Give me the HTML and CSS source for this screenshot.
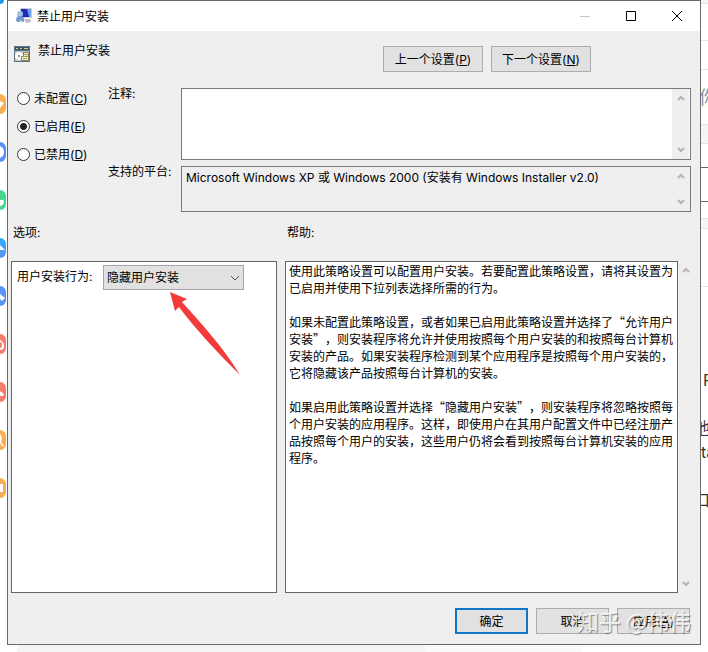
FILE: index.html
```html
<!DOCTYPE html>
<html lang="zh-CN">
<head>
    <meta charset="UTF-8">
    <meta name="viewport" content="width=device-width, initial-scale=1.0">
    <title>禁止用户安装</title>
    <link rel="stylesheet" href="styles.css">
</head>
<body>
    <!-- 窗口左侧露出的应用图标 -->
    <div class="dock">
        <span class="app sky"></span>
        <span class="app orange"><svg viewBox="0 0 6 20"><path d="M0 7l4 2-4 5z"/></svg></span>
        <span class="app blue"><svg viewBox="0 0 6 20"><path d="M0 4q4 2 4 6t-4 6z"/></svg></span>
        <span class="app green"><svg viewBox="0 0 6 20"><path d="M0 10q4-1 4 2t-4 4z"/></svg></span>
        <span class="app azure"><svg viewBox="0 0 6 20"><path d="M0 7l5 5H0z"/></svg></span>
        <span class="app blue"><svg viewBox="0 0 6 20"><path d="M0 8l5 4-3 3-2-2z"/></svg></span>
        <span class="app red"><svg viewBox="0 0 6 20"><path d="M0 5l1 2q3 1 3 5t-4 4v-2q2 0 2-3t-2-3z"/></svg></span>
        <span class="app red"><svg viewBox="0 0 6 20"><path d="M0 9l4 3-1 2H0z"/></svg></span>
        <span class="app orange"><svg viewBox="0 0 6 20"><path d="M0 4q3 3 1 8l3 4-1 1-3-4z"/></svg></span>
        <span class="app orange"><svg viewBox="0 0 6 20"><path d="M0 6h3v8H0z"/></svg></span>
    </div>

    <form class="window" onsubmit="return false">
        <header class="titlebar">
            <svg class="app-icon" viewBox="0 0 16 16">
                <path d="M4 0h12v10H4z" fill="#c9cdd8"/>
                <path d="M5 1h10v8H5z" fill="#1c2cae"/>
                <path d="M11 1h4v8h-2z" fill="#6f9cec"/>
                <path d="M8 11h6l1 3-5 1z" fill="#b9bdc4"/>
                <circle cx="4" cy="6" r="3" fill="#9fc4ec"/>
                <path d="M0 12q0-4 4-4t4 4v2H1z" fill="#6f9ace"/>
                <path d="M3 12l5 2-3 1z" fill="#e3e9f2"/>
            </svg>
            <h1>禁止用户安装</h1>
            <button type="button" class="win-btn" aria-label="最小化">
                <svg viewBox="0 0 10 10"><path d="M0 5.500h10" stroke="#c4c4c4"/></svg>
            </button>
            <button type="button" class="win-btn" aria-label="最大化">
                <svg viewBox="0 0 10 10"><path d="M.5.5h9v9h-9z" stroke="#000"/></svg>
            </button>
            <button type="button" class="win-btn" aria-label="关闭">
                <svg viewBox="0 0 10 10"><path d="M0 0l10 10M10 0L0 10" stroke="#000"/></svg>
            </button>
        </header>

        <section class="heading">
            <svg class="policy-icon" viewBox="0 0 16 16">
                <path d="M0 0h16v16H0z" fill="#5f7280"/>
                <path d="M1 1h14v3H1z" fill="#35536e"/>
                <path d="M2 2h2v1H2zM6 2h2v1H6zM10 2h4v1h-4z" fill="#e0c878"/>
                <path d="M1 5h14v10H1z" fill="#b9c4c0"/>
                <circle cx="5" cy="10" r="4" fill="#fff"/>
                <circle cx="5" cy="10" r="1" fill="#5c7a6c"/>
                <path d="M9.500 6.500h5v8h-7v-4h2z" fill="#f3edc8" stroke="#8c8250"/>
                <path d="M10 8.500h4M10 10.500h4M9 12.500h4" stroke="#a39a68"/>
            </svg>
            <h2>禁止用户安装</h2>
            <div class="nav">
                <button type="button" class="btn nav-btn">上一个设置(<u>P</u>)</button>
                <button type="button" class="btn nav-btn">下一个设置(<u>N</u>)</button>
            </div>
        </section>

        <section class="settings">
            <div class="states">
                <label><input type="radio" name="state" value="none"> 未配置(<u>C</u>)</label>
                <label><input type="radio" name="state" value="on" checked> 已启用(<u>E</u>)</label>
                <label><input type="radio" name="state" value="off"> 已禁用(<u>D</u>)</label>
            </div>
            <div class="fields">
                <label for="comment">注释:</label>
                <div class="box comment">
                    <textarea id="comment"></textarea>
                    <div class="scroll">
                        <svg viewBox="0 0 8 6"><path d="M1 5l3-3 3 3"/></svg>
                        <svg viewBox="0 0 8 6"><path d="M1 1l3 3 3-3"/></svg>
                    </div>
                </div>
                <label for="platform">支持的平台:</label>
                <div class="box platform">
                    <textarea id="platform" readonly>Microsoft Windows XP 或 Windows 2000 (安装有 Windows Installer v2.0)</textarea>
                    <div class="scroll">
                        <svg viewBox="0 0 8 6"><path d="M1 5l3-3 3 3"/></svg>
                        <svg viewBox="0 0 8 6"><path d="M1 1l3 3 3-3"/></svg>
                    </div>
                </div>
            </div>
        </section>

        <section class="panels">
            <h3>选项:</h3>
            <h3><label for="help">帮助:</label></h3>
            <div class="options">
                <label for="behavior">用户安装行为:</label>
                <div class="select">
                    <select id="behavior">
                        <option>隐藏用户安装</option>
                        <option>允许用户安装</option>
                    </select>
                    <svg viewBox="0 0 10 6"><path d="M1 1l4 4 4-4"/></svg>
                </div>
                <svg class="pointer" viewBox="0 0 72 84"><path d="M0 0l17 7-5 3c18 20 42 46 58 73C50 63 26 38 9 15l-4 4z"/></svg>
            </div>
            <div class="help">
                <textarea id="help" readonly>使用此策略设置可以配置用户安装。若要配置此策略设置，请将其设置为已启用并使用下拉列表选择所需的行为。

如果未配置此策略设置，或者如果已启用此策略设置并选择了“允许用户安装”，则安装程序将允许并使用按照每个用户安装的和按照每台计算机安装的产品。如果安装程序检测到某个应用程序是按照每个用户安装的，它将隐藏该产品按照每台计算机的安装。

如果启用此策略设置并选择“隐藏用户安装”，则安装程序将忽略按照每个用户安装的应用程序。这样，即使用户在其用户配置文件中已经注册产品按照每个用户的安装，这些用户仍将会看到按照每台计算机安装的应用程序。</textarea>
                <div class="scroll">
                    <svg viewBox="0 0 8 6"><path d="M1 5l3-3 3 3"/></svg>
                    <svg viewBox="0 0 8 6"><path d="M1 1l3 3 3-3"/></svg>
                </div>
            </div>
        </section>

        <footer class="actions">
            <button type="submit" class="btn default">确定</button>
            <button type="button" class="btn">取消</button>
            <button type="button" class="btn">应用(<u>A</u>)</button>
            <span class="watermark">知乎 @伟伟</span>
        </footer>
    </form>

    <!-- 窗口右侧露出的网页 -->
    <div class="behind">
        <div class="row bar"></div>
        <div class="row tabs"></div>
        <div class="row tools"></div>
        <div class="row name">你</div>
        <div class="row band"></div>
        <div class="row gap"></div>
        <div class="row field"></div>
        <div class="row gap"></div>
        <div class="row thin"></div>
        <div class="row blank"></div>
        <div class="row article">
            <p class="lead">R</p>
            <p class="cut">他</p>
            <p>ta</p>
            <p class="cut last">口</p>
        </div>
    </div>

    <div class="below"></div>
</body>
</html>
```
FILE: styles.css
```css
* {
    box-sizing: border-box;
}

body {
    margin: 0;
    height: 100vh;
    display: grid;
    grid-template-columns: 7px 1fr 7px;
    grid-template-rows: minmax(0, 1fr) 7px;
    overflow: hidden;
    background: #fff;
    color: #000;
    font: 12px/17px Inter, "Noto Sans CJK SC", sans-serif;
}

h1, h2, h3, p {
    margin: 0;
    font-size: 12px;
    font-weight: normal;
}

button, select, textarea {
    font: inherit;
    color: inherit;
    border-radius: 0;
}

/* 左侧图标 */
.dock {
    display: flex;
    flex-direction: column;
    gap: 28px;
    overflow: hidden;
}

.app {
    flex: none;
    width: 6px;
    height: 20px;
    border-radius: 0 6px 6px 0;
}

.app svg {
    display: block;
    width: 6px;
    height: 20px;
    fill: #fff;
}

.sky {
    width: 4px;
    height: 4px;
    margin-bottom: 62px;
    background: #1a9af5;
    border-radius: 0 0 4px 0;
}

.orange { background: #fbae52; }
.blue { background: #5b93fa; }
.green { background: #45d68b; }
.azure { background: linear-gradient(#27b0f7, #5b93fa); }
.red { background: #fa7a6c; }

/* 窗口 */
.window {
    display: flex;
    flex-direction: column;
    background: #efefef;
    border: 1px solid #6a6a6a;
}

.titlebar {
    display: flex;
    align-items: center;
    height: 30px;
    padding-left: 8px;
    background: #fff;
}

.titlebar h1 {
    flex: 1;
    margin-left: 5px;
}

.app-icon, .policy-icon {
    width: 16px;
    height: 16px;
}

.win-btn {
    display: grid;
    place-items: center;
    width: 46px;
    height: 30px;
    padding: 0;
    background: none;
    border: none;
}

.win-btn svg {
    width: 10px;
    height: 10px;
    fill: none;
}

.heading {
    display: flex;
    padding: 15px 109px 0 6px;
    height: 57px;
}

.heading h2 {
    flex: 1;
    margin: -4px 0 0 8px;
}

.nav {
    display: flex;
    gap: 8px;
}

.btn {
    width: 73px;
    height: 26px;
    padding: 0;
    background: #e1e1e1;
    border: 1px solid #adadad;
}

.nav-btn {
    width: 100px;
}

.default {
    border: 2px solid #0f77c6;
}

.settings {
    display: flex;
    padding: 0 9px;
}

.states {
    display: flex;
    flex-direction: column;
    gap: 11px;
    width: 91px;
    padding-top: 2px;
}

.states label {
    display: flex;
    align-items: center;
}

.states input {
    appearance: none;
    width: 13px;
    height: 13px;
    margin: 0 4px 0 0;
    background: #fff;
    border: 1px solid #333;
    border-radius: 50%;
}

.states input:checked {
    background: radial-gradient(circle, #222 3px, #fff 4px);
}

.fields {
    flex: 1;
    display: grid;
    grid-template-columns: 73px 1fr;
    grid-template-rows: 72px 46px;
    row-gap: 6px;
}

.fields label {
    margin-top: -3px;
}

.box {
    display: flex;
    border: 1px solid #7a7a7a;
    background: #fff;
}

textarea {
    flex: 1;
    padding: 2px 4px;
    border: none;
    outline: none;
    resize: none;
    overflow: hidden;
    background: transparent;
}

.box.platform {
    background: #efefef;
}

.scroll {
    display: flex;
    flex-direction: column;
    justify-content: space-between;
    align-items: center;
    width: 17px;
    padding: 6px 0;
    background: #efefef;
}

.scroll svg {
    width: 8px;
    height: 6px;
    fill: none;
    stroke: #b4b4b4;
    stroke-width: 2;
}

.box .scroll {
    margin-right: 1px;
}

/* 选项与帮助 */
.panels {
    flex: 1;
    min-height: 0;
    display: grid;
    grid-template-columns: 266fr 409fr;
    grid-template-rows: 37px minmax(0, 1fr);
    column-gap: 8px;
    margin-top: 12px;
    padding: 0 6px 0 3px;
}

.panels h3 {
    padding-left: 2px;
}

.options {
    position: relative;
    display: flex;
    align-items: flex-start;
    padding: 3px 5px;
    background: #fff;
    border: 1px solid #666;
}

.options label {
    width: 86px;
    margin-top: 3px;
}

.select {
    position: relative;
    width: 141px;
}

.select select {
    appearance: none;
    display: block;
    width: 100%;
    height: 25px;
    padding: 0 3px;
    background: #e1e1e1;
    border: 1px solid #a5a5a5;
}

.select svg {
    position: absolute;
    right: 4px;
    top: 10px;
    width: 10px;
    height: 6px;
    fill: none;
    stroke: #555;
    pointer-events: none;
}

.pointer {
    position: absolute;
    left: 158px;
    top: 30px;
    width: 72px;
    height: 84px;
    fill: #f33b3b;
}

.help {
    display: flex;
}

.help textarea {
    padding: 0 3px;
    background: #fff;
    border: 1px solid #666;
    font-family: "Noto Sans CJK SC", sans-serif;
    text-spacing-trim: space-all;
}

.help .scroll {
    width: 16px;
}

.actions {
    position: relative;
    display: flex;
    justify-content: flex-end;
    gap: 8px;
    padding: 15px 10px 10px;
}

.watermark {
    position: absolute;
    right: 9px;
    bottom: 9px;
    color: rgba(255, 255, 255, 0.8);
    font: 500 22px/30px "Noto Sans CJK SC", sans-serif;
    text-shadow: 1px 1px 1px rgba(0, 0, 0, 0.4);
    pointer-events: none;
}

/* 右侧网页 */
.behind {
    overflow: hidden;
    font-size: 18px;
    line-height: 24px;
    color: #333;
}

.row {
    border-bottom: 1px solid #e4e4e4;
}

.bar { height: 4px; background: #f5f5f5; }
.tabs { height: 37px; }
.tools { height: 29px; }

.name {
    height: 55px;
    padding-top: 16px;
    color: #8793a3;
    text-indent: -2px;
}

.band { height: 19px; background: #f5f5f5; }
.gap { height: 24px; border-color: #666; }
.field { height: 34px; border-color: #666; }
.field + .gap { height: 17px; border-color: #e4e4e4; }
.thin { height: 10px; background: #f5f5f5; }
.blank { height: 58px; }

.article {
    padding-top: 81px;
    border: none;
}

.article p {
    font-size: 16px;
}

.article .lead {
    padding-left: 2px;
    margin-bottom: 24px;
}

.article .cut {
    text-indent: -7px;
}

.article .last {
    margin-top: 24px;
}

.below {
    grid-column: 1 / -1;
    margin: 0 125px 0 17px;
    background: linear-gradient(to right, #f4f4f4 72%, #fafafa 72%);
}
```
